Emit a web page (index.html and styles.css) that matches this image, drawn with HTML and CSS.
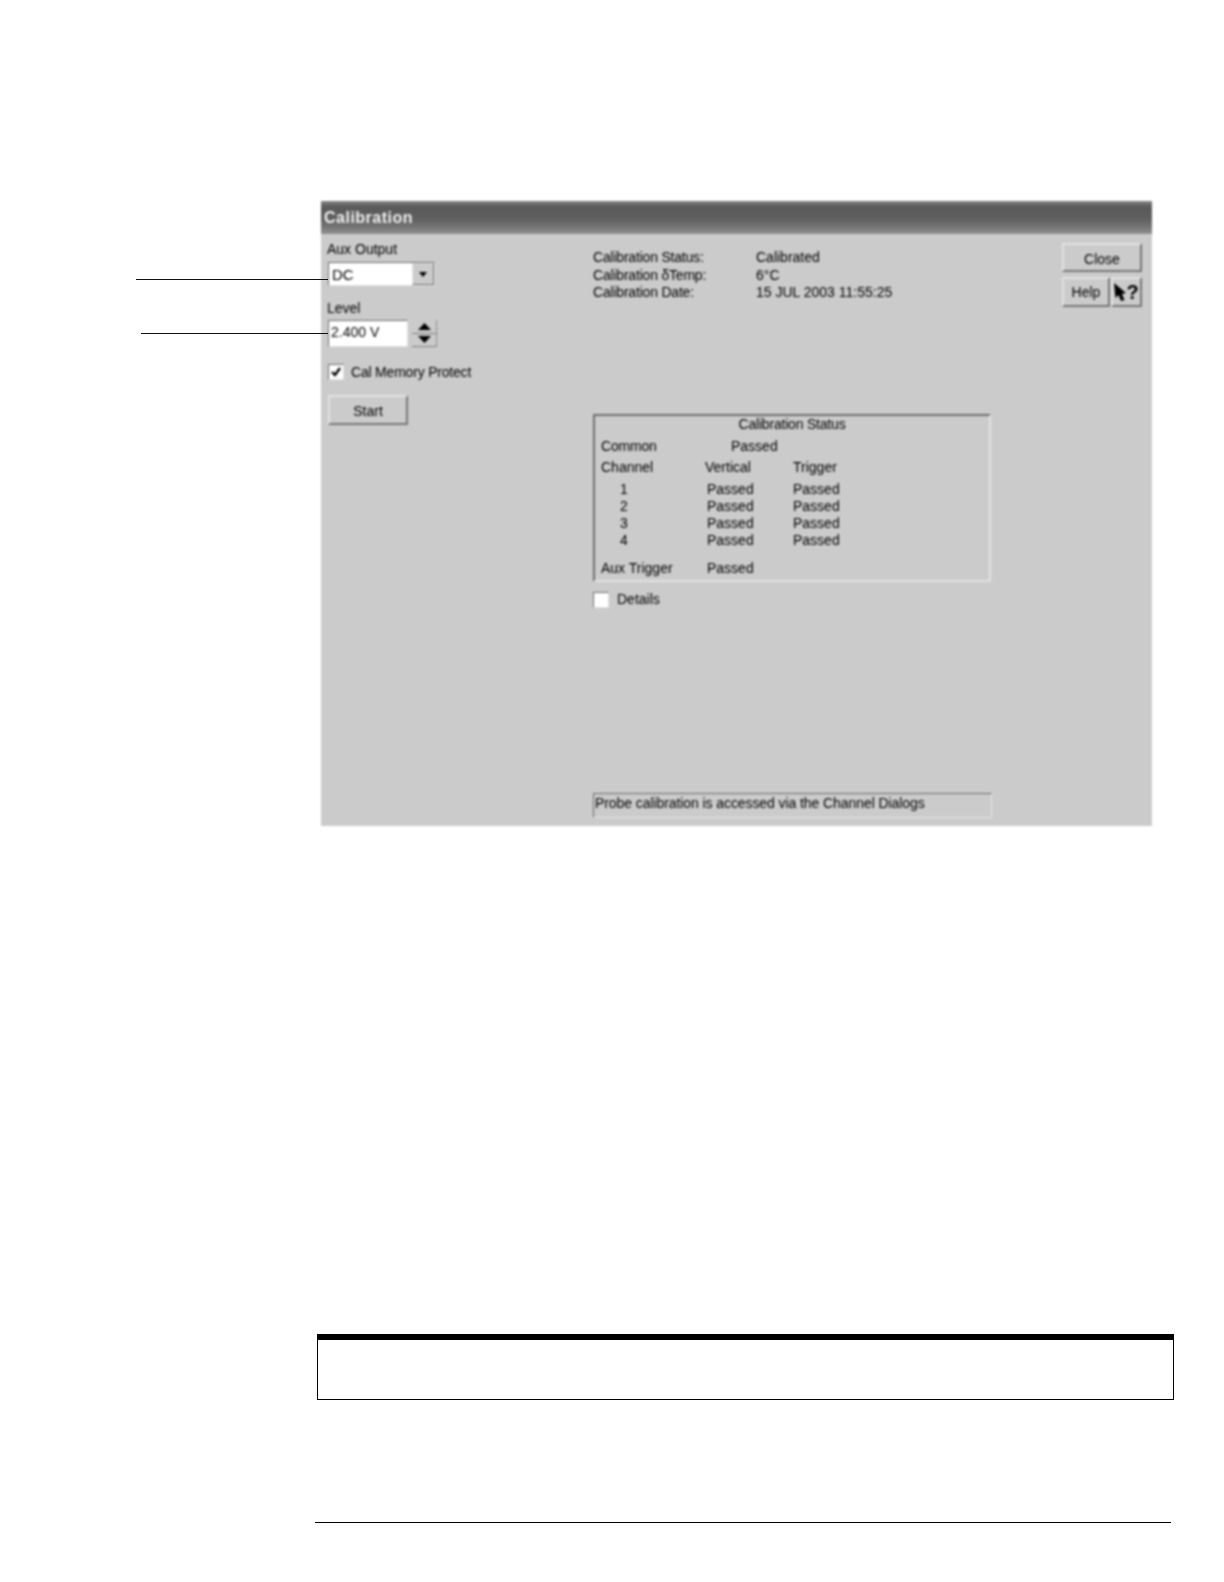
FILE: index.html
```html
<!DOCTYPE html>
<html lang="en">
<head>
<meta charset="utf-8">
<title>Calibration</title>
<link rel="stylesheet" href="styles.css">
</head>
<body>
<div class="page">
  <span class="leader leader-aux"></span>
  <span class="leader leader-level"></span>
  <section class="dialog">
    <header class="titlebar">Calibration</header>
    <div class="dialog-body">
      <div class="col-left">
        <div class="label">Aux Output</div>
        <div class="select">
          <span class="field-text">DC</span>
          <span class="select-btn"><svg width="8" height="5" viewBox="0 0 8 5"><path d="M0 0h8L4 5z"/></svg></span>
        </div>
        <div class="label label-level">Level</div>
        <div class="spin">
          <div class="spin-field">2.400 V</div>
          <div class="spin-btns">
            <span class="spin-btn"><svg width="13" height="7" viewBox="0 0 13 7"><path d="M6.500 0L13 7H0z"/></svg></span>
            <span class="spin-btn"><svg width="13" height="7" viewBox="0 0 13 7"><path d="M0 0h13L6.500 7z"/></svg></span>
          </div>
        </div>
        <div class="check-row check-cal">
          <span class="checkbox"><svg width="12" height="12" viewBox="0 0 12 12"><path d="M2 6l3 3 5-7" fill="none" stroke="#000" stroke-width="2.400"/></svg></span>
          <span class="tight">Cal Memory Protect</span>
        </div>
        <div class="btn btn-start">Start</div>
      </div>
      <div class="col-center">
        <div class="status-list">
          <div class="status-row"><span class="status-key tight">Calibration Status:</span><span>Calibrated</span></div>
          <div class="status-row"><span class="status-key tight">Calibration &#948;Temp:</span><span>6&#176;C</span></div>
          <div class="status-row"><span class="status-key tight">Calibration Date:</span><span>15 JUL 2003 11:55:25</span></div>
        </div>
        <div class="group">
          <div class="group-title tight">Calibration Status</div>
          <div class="row row-common"><span class="tight">Common</span><span class="passed-common">Passed</span></div>
          <div class="row row-head"><span>Channel</span><span>Vertical</span><span>Trigger</span></div>
          <div class="row row-first"><span class="num">1</span><span class="passed">Passed</span><span>Passed</span></div>
          <div class="row"><span class="num">2</span><span class="passed">Passed</span><span>Passed</span></div>
          <div class="row"><span class="num">3</span><span class="passed">Passed</span><span>Passed</span></div>
          <div class="row"><span class="num">4</span><span class="passed">Passed</span><span>Passed</span></div>
          <div class="row row-aux"><span>Aux Trigger</span><span class="passed">Passed</span></div>
        </div>
        <div class="check-row check-details">
          <span class="checkbox"></span>
          <span>Details</span>
        </div>
        <div class="message">Probe calibration is accessed via the Channel Dialogs</div>
      </div>
      <div class="col-right">
        <div class="btn btn-close">Close</div>
        <div class="help-row">
          <div class="btn btn-help">Help</div>
          <div class="btn btn-whatsthis">
            <svg width="12" height="18" viewBox="0 0 12 18"><path d="M0 0L12 10 8 11 10.500 17 7 18 4.500 12 1.500 15z"/></svg>
            <span class="qmark">?</span>
          </div>
        </div>
      </div>
    </div>
  </section>
  <div class="note-box"></div>
  <div class="foot-rule"></div>
</div>
</body>
</html>
```

FILE: styles.css
```css
* { box-sizing: border-box; }
html, body { margin: 0; background: #fff; }
body { font-family: "Liberation Sans", Arial, sans-serif; font-size: 14px; color: #000; }
.page { position: relative; height: 1582px; padding-top: 201px; overflow: hidden; }
.leader { position: absolute; height: 1px; background: #111; z-index: 2; }
.leader-aux { left: 136px; width: 192px; top: 279px; }
.leader-level { left: 141px; width: 187px; top: 333px; }
.tight { letter-spacing: -0.2px; }

.dialog { margin-left: 321px; width: 831px; height: 625px; background: #cbcbcb; filter: blur(0.8px); }
.titlebar {
  height: 33px; line-height: 34px; padding-left: 3px;
  font-size: 16px; font-weight: 700; letter-spacing: 0.5px; color: #f0f0f0;
  background: linear-gradient(180deg, #858585 0%, #5a5a5a 18%, #606060 55%, #767676 80%, #919191 100%);
}
.dialog-body { display: grid; grid-template-columns: 272px 469px 80px; line-height: 17px; }

.col-left { padding: 7px 0 0 6px; }
.label { height: 17px; }
.select, .spin-field, .checkbox, .message { border: 1px solid; border-color: #6a6a6a #e2e2e2 #e2e2e2 #6a6a6a; }
.select { display: flex; margin: 4px 0 0 1px; width: 107px; height: 24px; background: #fff; }
.field-text { flex: 1; padding: 3px 0 0 3px; font-size: 15px; }
.select-btn { width: 22px; display: flex; align-items: center; justify-content: center; background: #cbcbcb; border: 1px solid; border-color: #e8e8e8 #707070 #707070 #e8e8e8; }
.label-level { margin-top: 14px; }
.spin { display: flex; gap: 4px; margin: 3px 0 0 1px; height: 27px; }
.spin-field { width: 80px; padding: 3px 0 0 2px; background: #fff; }
.spin-btns { display: flex; flex-direction: column; width: 25px; }
.spin-btn { flex: 1; display: flex; align-items: center; justify-content: center; border-bottom: 1px solid #808080; border-right: 1px solid #909090; }

.check-row { display: flex; align-items: center; }
.checkbox { width: 16px; height: 16px; background: #fff; flex: none; display: flex; align-items: center; justify-content: center; }
.check-cal { margin: 17px 0 0 1px; gap: 7px; height: 16px; }
.check-details { margin-top: 10px; gap: 8px; height: 15px; }

.btn { display: flex; align-items: center; justify-content: center; background: #cbcbcb; border: 2px solid; border-color: #e2e2e2 #767676 #767676 #e2e2e2; color: #000; }
.btn-start { margin: 15px 0 0 1px; width: 80px; height: 30px; padding-top: 2px; }

.col-center { width: 399px; }
.status-list { padding-top: 15px; height: 68px; }
.status-row { display: flex; line-height: 17.500px; }
.status-key { width: 163px; }
.group { margin-top: 112px; height: 168px; width: 398px; border: 2px solid; border-color: #6e6e6e #e2e2e2 #e2e2e2 #6e6e6e; padding: 0 0 0 6px; }
.group-title { text-align: center; height: 17px; padding-right: 6px; }
.row { display: grid; grid-template-columns: 104px 86px 1fr; height: 17px; padding-left: 0; }
.row > :nth-child(3) { padding-left: 2px; }
.row-common { margin-top: 5px; }
.row-head { margin-top: 4px; }
.row-first { margin-top: 5px; }
.row-aux { margin-top: 11px; }
.num { padding-left: 19px; }
.passed { padding-left: 2px; }
.passed-common { padding-left: 26px; white-space: nowrap; }
.message { margin-top: 186px; height: 25px; padding: 0 0 0 1px; line-height: 18px; white-space: nowrap; letter-spacing: -0.08px; }

.col-right { padding-top: 9px; }
.btn-close { height: 29px; padding-top: 3px; }
.help-row { display: flex; gap: 1px; margin-top: 5px; height: 30px; }
.btn-help { width: 48px; padding-top: 1px; }
.btn-whatsthis { width: 31px; color: #000; }
.qmark { font-size: 20px; font-weight: 700; line-height: 18px; }

.note-box { margin: 508px 0 0 317px; width: 857px; height: 66px; border: 1px solid #000; border-top-width: 6px; }
.foot-rule { margin: 122px 0 0 315px; width: 856px; height: 1px; background: #000; }
```
